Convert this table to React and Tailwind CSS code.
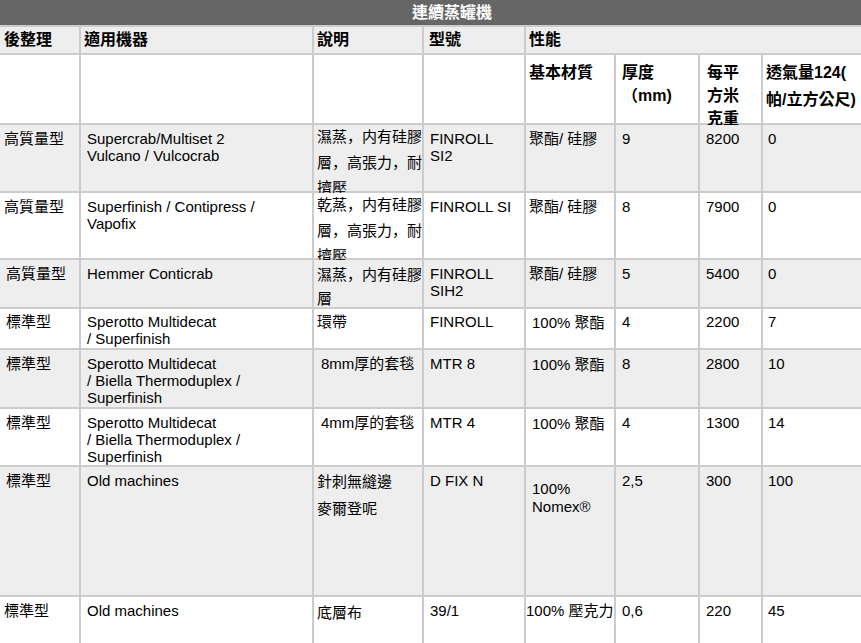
import React from "react";

const G = "bg-[#eeeeee]";
const W = "bg-white";

function C({ bg, className = "", children }) {
  return <div className={`whitespace-nowrap ${bg} ${className}`}>{children}</div>;
}

function Cm() {
  return <span className="font-['Noto_Sans_CJK_JP',sans-serif]">，</span>;
}

function Row({ bg, cells }) {
  return cells.map((c, i) => (
    <C key={i} bg={bg} className={c[0]}>
      {c[1]}
    </C>
  ));
}

export default function App() {
  return (
    <div className="grid w-[861px] grid-cols-[79px_231px_108px_100px_88px_82px_61px_98px] grid-rows-[25px_26px_68px_66px_65px_47px_39px_57px_56px_128px_46px] gap-[2px] overflow-hidden bg-[#cccccc] font-['Liberation_Sans','Noto_Sans_CJK_TC',sans-serif] text-[15px] leading-[17px] text-black">
      {/* title */}
      <div className="col-span-8 bg-[#666666] pl-[43px] text-center text-[16px] font-bold leading-[25px] text-white">
        連續蒸罐機
      </div>

      {/* header row 1 */}
      <C bg={G} className="pl-[4px] text-[16px] font-bold leading-[26px]">後整理</C>
      <C bg={G} className="pl-[3px] text-[16px] font-bold leading-[26px]">適用機器</C>
      <C bg={G} className="pl-[3px] text-[16px] font-bold leading-[26px]">說明</C>
      <C bg={G} className="pl-[5px] text-[16px] font-bold leading-[26px]">型號</C>
      <C bg={G} className="col-span-4 pl-[3px] text-[16px] font-bold leading-[26px]">性能</C>

      {/* header row 2 */}
      <C bg={W} />
      <C bg={W} />
      <C bg={W} />
      <C bg={W} />
      <C bg={W} className="pl-[3px] pt-[6px] text-[16px] font-bold leading-[23px]">基本材質</C>
      <C bg={W} className="pl-[6px] pt-[6px] text-[16px] font-bold leading-[23px]">
        厚度
        <br />
        （mm)
      </C>
      <C bg={W} className="pl-[7px] pt-[6px] text-[16px] font-bold leading-[23px]">
        每平
        <br />
        方米
        <br />
        克重
      </C>
      <C bg={W} className="pl-[3px] pt-[4px] text-[16px] font-bold leading-[27px]">
        透氣量124(
        <br />
        帕/立方公尺)
      </C>

      {/* row 1 */}
      <Row
        bg={G}
        cells={[
          ["pl-[4px] pt-[5px]", "高質量型"],
          ["pl-[6px] pt-[5px]", <>Supercrab/Multiset 2<br />Vulcano / Vulcocrab</>],
          ["pl-[3px]", <div className="-mt-[2px] leading-[25px]">濕蒸<Cm />内有硅膠<br />層<Cm />高張力<Cm />耐<br />擠壓</div>],
          ["pl-[6px] pt-[5px]", <>FINROLL<br />SI2</>],
          ["pl-[3px] pt-[5px]", "聚酯/ 硅膠"],
          ["pl-[6px] pt-[5px]", "9"],
          ["pl-[6px] pt-[5px]", "8200"],
          ["pl-[5px] pt-[5px]", "0"],
        ]}
      />

      {/* row 2 */}
      <Row
        bg={W}
        cells={[
          ["pl-[4px] pt-[5px]", "高質量型"],
          ["pl-[6px] pt-[5px]", <>Superfinish / Contipress /<br />Vapofix</>],
          ["pl-[3px]", <div className="-mt-[2px] leading-[25px]">乾蒸<Cm />内有硅膠<br />層<Cm />高張力<Cm />耐<br />擠壓</div>],
          ["pl-[6px] pt-[5px]", "FINROLL SI"],
          ["pl-[3px] pt-[5px]", "聚酯/ 硅膠"],
          ["pl-[6px] pt-[5px]", "8"],
          ["pl-[6px] pt-[5px]", "7900"],
          ["pl-[5px] pt-[5px]", "0"],
        ]}
      />

      {/* row 3 */}
      <Row
        bg={G}
        cells={[
          ["pl-[6px] pt-[5px]", "高質量型"],
          ["pl-[6px] pt-[5px]", "Hemmer Conticrab"],
          ["pl-[3px] pt-[2px] leading-[24px]", <>濕蒸<Cm />内有硅膠<br />層</>],
          ["pl-[6px] pt-[5px]", <>FINROLL<br />SIH2</>],
          ["pl-[3px] pt-[5px]", "聚酯/ 硅膠"],
          ["pl-[6px] pt-[5px]", "5"],
          ["pl-[6px] pt-[5px]", "5400"],
          ["pl-[5px] pt-[5px]", "0"],
        ]}
      />

      {/* row 4 */}
      <Row
        bg={W}
        cells={[
          ["pl-[6px] pt-[4px]", "標準型"],
          ["pl-[6px] pt-[4px]", <>Sperotto Multidecat<br />/ Superfinish</>],
          ["pl-[3px] pt-[4px]", "環帶"],
          ["pl-[6px] pt-[4px]", "FINROLL"],
          ["pl-[6px] pt-[5px]", "100% 聚酯"],
          ["pl-[6px] pt-[4px]", "4"],
          ["pl-[6px] pt-[4px]", "2200"],
          ["pl-[5px] pt-[4px]", "7"],
        ]}
      />

      {/* row 5 */}
      <Row
        bg={G}
        cells={[
          ["pl-[6px] pt-[5px]", "標準型"],
          ["pl-[6px] pt-[5px]", <>Sperotto Multidecat<br />/ Biella Thermoduplex /<br />Superfinish</>],
          ["pl-[7px] pt-[5px]", "8mm厚的套毯"],
          ["pl-[6px] pt-[5px]", "MTR 8"],
          ["pl-[6px] pt-[6px]", "100% 聚酯"],
          ["pl-[6px] pt-[5px]", "8"],
          ["pl-[6px] pt-[5px]", "2800"],
          ["pl-[5px] pt-[5px]", "10"],
        ]}
      />

      {/* row 6 */}
      <Row
        bg={W}
        cells={[
          ["pl-[6px] pt-[5px]", "標準型"],
          ["pl-[6px] pt-[5px]", <>Sperotto Multidecat<br />/ Biella Thermoduplex /<br />Superfinish</>],
          ["pl-[7px] pt-[5px]", "4mm厚的套毯"],
          ["pl-[6px] pt-[5px]", "MTR 4"],
          ["pl-[6px] pt-[6px]", "100% 聚酯"],
          ["pl-[6px] pt-[5px]", "4"],
          ["pl-[6px] pt-[5px]", "1300"],
          ["pl-[5px] pt-[5px]", "14"],
        ]}
      />

      {/* row 7 */}
      <Row
        bg={G}
        cells={[
          ["pl-[6px] pt-[5px]", "標準型"],
          ["pl-[6px] pt-[5px]", "Old machines"],
          ["pl-[3px] pt-[1px] leading-[27px]", <>針刺無縫邊<br />麥爾登呢</>],
          ["pl-[6px] pt-[5px]", "D FIX N"],
          ["pl-[6px] pt-[13px] leading-[18px]", <>100%<br />Nomex®</>],
          ["pl-[6px] pt-[5px]", "2,5"],
          ["pl-[6px] pt-[5px]", "300"],
          ["pl-[5px] pt-[5px]", "100"],
        ]}
      />

      {/* row 8 */}
      <Row
        bg={W}
        cells={[
          ["pl-[4px] pt-[5px]", "標準型"],
          ["pl-[6px] pt-[5px]", "Old machines"],
          ["pl-[3px] pt-[7px]", "底層布"],
          ["pl-[6px] pt-[5px]", "39/1"],
          ["pl-[0px] pt-[5px]", "100% 壓克力"],
          ["pl-[6px] pt-[5px]", "0,6"],
          ["pl-[6px] pt-[5px]", "220"],
          ["pl-[5px] pt-[5px]", "45"],
        ]}
      />
    </div>
  );
}
